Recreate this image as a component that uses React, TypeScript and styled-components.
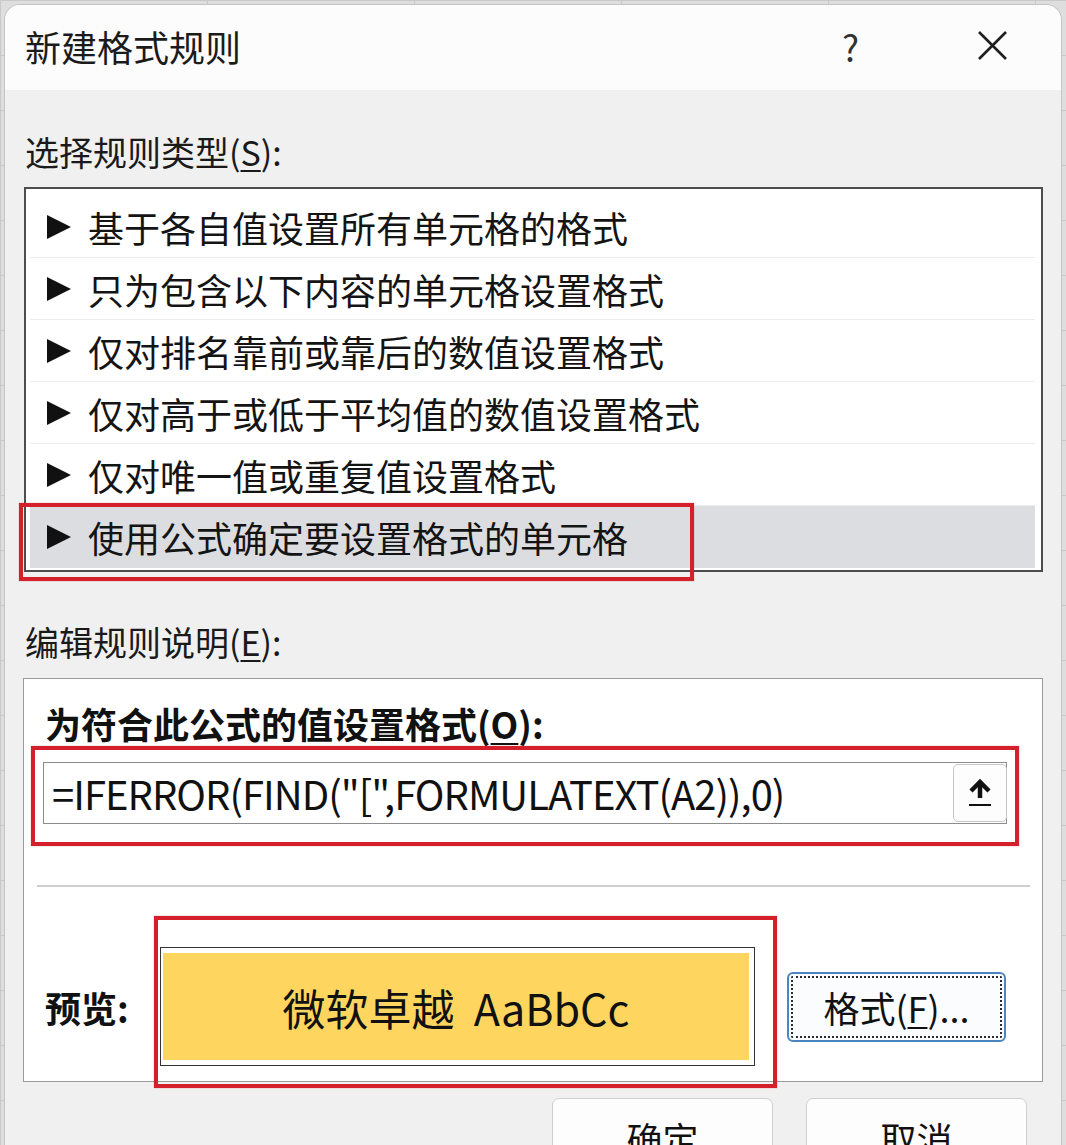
import { FC } from 'react'
import styled, { createGlobalStyle } from 'styled-components'

const GlobalStyle = createGlobalStyle`
	html, body {
		margin: 0;
		padding: 0;
	}

	body {
		width: 1066px;
		height: 1145px;
		overflow: hidden;
		background-color: #dedede;
		background-image:
			linear-gradient(to right, #c9c9c9 1px, transparent 1px),
			linear-gradient(to bottom, #c9c9c9 1px, transparent 1px);
		background-size: 207px 100%, 100% 55px;
		font-family: 'Noto Sans CJK SC', 'Noto Sans', sans-serif;
		color: #111;
	}
`

const Dialog = styled.div`
	position: relative;
	box-sizing: border-box;
	margin: 4px 0 0 4px;
	width: 1058px;
	height: 1141px;
	background: #f0f0f0;
	border: 1px solid #c4c4c4;
	border-bottom: none;
	border-radius: 16px 16px 0 0;
	overflow: hidden;
`

const TitleBar = styled.div`
	display: flex;
	align-items: center;
	box-sizing: border-box;
	height: 85px;
	padding: 0 53px 4px 20px;
	background: #fcfcfc;
`

const Title = styled.div`
	flex: 1;
	font-size: 36px;
	line-height: 40px;
	color: #1b1b1b;
`

const HelpMark = styled.span`
	width: 20px;
	margin-right: 115px;
	font-size: 36px;
	line-height: 40px;
	color: #333;
`

const CloseIcon = styled.svg`
	display: block;
	width: 31px;
	height: 31px;
`

const Body = styled.div`
	display: flex;
	flex-direction: column;
	padding: 0 18px 0 19px;
`

const SectionLabel = styled.div<{ $top: number; $bottom: number }>`
	height: 34px;
	margin: ${({ $top }) => $top}px 0 ${({ $bottom }) => $bottom}px;
	padding-left: 1px;
	font-size: 34px;
	line-height: 34px;
	color: #1a1a1a;
	white-space: nowrap;
`

const Key = styled.u`
	text-decoration: underline;
	text-decoration-thickness: 2px;
	text-underline-offset: 4px;
`

const ListBox = styled.div`
	box-sizing: border-box;
	height: 385px;
	padding: 7px 6px 0 4px;
	background: #fff;
	border: 2px solid #4d4d4d;
`

const Row = styled.div<{ $selected?: boolean }>`
	display: flex;
	align-items: center;
	box-sizing: border-box;
	height: 62px;
	padding-left: 17px;
	background: ${({ $selected }) => ($selected ? '#dcdde1' : 'transparent')};
	border-bottom: 1px solid ${({ $selected }) => ($selected ? 'transparent' : '#ececec')};
	font-size: 36px;
	line-height: 40px;
	color: #141414;
	white-space: nowrap;
`

const Arrow = styled.span`
	width: 0;
	height: 0;
	margin-right: 17px;
	border-left: 24px solid #111;
	border-top: 12px solid transparent;
	border-bottom: 12px solid transparent;
`

const GroupBox = styled.div`
	box-sizing: border-box;
	height: 404px;
	margin-left: -1px;
	background: #fff;
	border: 1px solid #9a9a9a;
	display: flex;
	flex-direction: column;
`

const BoldLabel = styled.div`
	margin: 26px 0 0 21px;
	font-size: 36px;
	line-height: 36px;
	font-weight: bold;
	color: #111;
	white-space: nowrap;
`

const FormulaBox = styled.div`
	display: flex;
	align-items: center;
	box-sizing: border-box;
	height: 62px;
	margin: 21px 35px 0 19px;
	border: 1px solid #8c8c8c;
	background: #fff;
`

const FormulaText = styled.span`
	flex: 1;
	padding-left: 8px;
	font-size: 40px;
	line-height: 46px;
	letter-spacing: -1px;
	color: #111;
	white-space: nowrap;
`

const RefButton = styled.div`
	display: flex;
	align-items: center;
	justify-content: center;
	box-sizing: border-box;
	width: 54px;
	height: 58px;
	margin-right: -1px;
	background: #fdfdfd;
	border: 1px solid #c6c6c6;
	border-radius: 5px;
`

const Separator = styled.div`
	height: 2px;
	margin: 61px 12px 0 13px;
	background: #cfcfcf;
`

const PreviewRow = styled.div`
	display: flex;
	align-items: center;
	margin-top: 60px;
	padding-left: 21px;
`

const PreviewLabel = styled.div`
	width: 115px;
	font-size: 36px;
	line-height: 40px;
	font-weight: bold;
	color: #111;
`

const PreviewFrame = styled.div`
	box-sizing: border-box;
	width: 595px;
	height: 119px;
	padding: 5px 5px 5px 2px;
	border: 1px solid #333;
	background: #fff;
`

const Swatch = styled.div`
	display: flex;
	align-items: center;
	justify-content: center;
	height: 100%;
	background: #fed65f;
	font-size: 43px;
	line-height: 48px;
	color: #111;
	white-space: pre;
`

const FormatButton = styled.div`
	position: relative;
	display: flex;
	align-items: center;
	justify-content: center;
	box-sizing: border-box;
	width: 219px;
	height: 70px;
	margin-left: 32px;
	background: #fbfcfe;
	border: 2px solid #4b86c2;
	border-radius: 6px;
	font-size: 36px;
	line-height: 40px;
	color: #111;

	&::after {
		content: '';
		position: absolute;
		inset: 2px;
		border: 2px dotted #2c2c2c;
		border-radius: 2px;
	}
`

const ButtonRow = styled.div`
	display: flex;
	justify-content: flex-end;
	gap: 33px;
	margin-top: 16px;
	padding-right: 16px;
`

const DialogButton = styled.div`
	display: flex;
	align-items: center;
	justify-content: center;
	box-sizing: border-box;
	width: 221px;
	height: 80px;
	background: #fdfdfd;
	border: 1px solid #cfcfcf;
	border-radius: 7px;
	font-size: 36px;
	line-height: 40px;
	color: #111;
`

const Highlight = styled.div<{ $left: number; $top: number; $width: number; $height: number }>`
	position: absolute;
	left: ${({ $left }) => $left}px;
	top: ${({ $top }) => $top}px;
	width: ${({ $width }) => $width}px;
	height: ${({ $height }) => $height}px;
	box-sizing: border-box;
	border: 4px solid #d4202b;
	box-shadow: 0 0 1px rgba(212, 32, 43, 0.6);
	pointer-events: none;
`

const ruleTypes = [
	'基于各自值设置所有单元格的格式',
	'只为包含以下内容的单元格设置格式',
	'仅对排名靠前或靠后的数值设置格式',
	'仅对高于或低于平均值的数值设置格式',
	'仅对唯一值或重复值设置格式',
	'使用公式确定要设置格式的单元格',
]

const App: FC = () => (
	<>
		<GlobalStyle />
		<Dialog>
			<TitleBar>
				<Title>新建格式规则</Title>
				<HelpMark>?</HelpMark>
				<CloseIcon viewBox="0 0 31 31">
					<path d="M2 2 L29 29 M29 2 L2 29" stroke="#1f1f1f" strokeWidth="2.6" fill="none" />
				</CloseIcon>
			</TitleBar>
			<Body>
				<SectionLabel $top={45} $bottom={18}>
					选择规则类型(<Key>S</Key>):
				</SectionLabel>
				<ListBox>
					{ruleTypes.map((text, i) => (
						<Row key={text} $selected={i === ruleTypes.length - 1}>
							<Arrow />
							{text}
						</Row>
					))}
				</ListBox>
				<SectionLabel $top={53} $bottom={19}>
					编辑规则说明(<Key>E</Key>):
				</SectionLabel>
				<GroupBox>
					<BoldLabel>
						为符合此公式的值设置格式(<Key>O</Key>):
					</BoldLabel>
					<FormulaBox>
						<FormulaText>=IFERROR(FIND("[",FORMULATEXT(A2)),0)</FormulaText>
						<RefButton>
							<svg width="26" height="32" viewBox="0 0 26 32">
								<path d="M13 21 V6" stroke="#111" strokeWidth="4.5" fill="none" />
								<path d="M4 14 L13 5 L22 14" stroke="#111" strokeWidth="4.5" fill="none" strokeLinejoin="miter" />
								<path d="M2 28 H24" stroke="#111" strokeWidth="2" />
							</svg>
						</RefButton>
					</FormulaBox>
					<Separator />
					<PreviewRow>
						<PreviewLabel>预览:</PreviewLabel>
						<PreviewFrame>
							<Swatch>{'微软卓越  AaBbCc'}</Swatch>
						</PreviewFrame>
						<FormatButton>
							格式(<Key>F</Key>)...
						</FormatButton>
					</PreviewRow>
				</GroupBox>
				<ButtonRow>
					<DialogButton>确定</DialogButton>
					<DialogButton>取消</DialogButton>
				</ButtonRow>
			</Body>
			<Highlight $left={14} $top={498} $width={675} $height={78} />
			<Highlight $left={26} $top={741} $width={988} $height={100} />
			<Highlight $left={149} $top={911} $width={623} $height={172} />
		</Dialog>
	</>
)

export default App
